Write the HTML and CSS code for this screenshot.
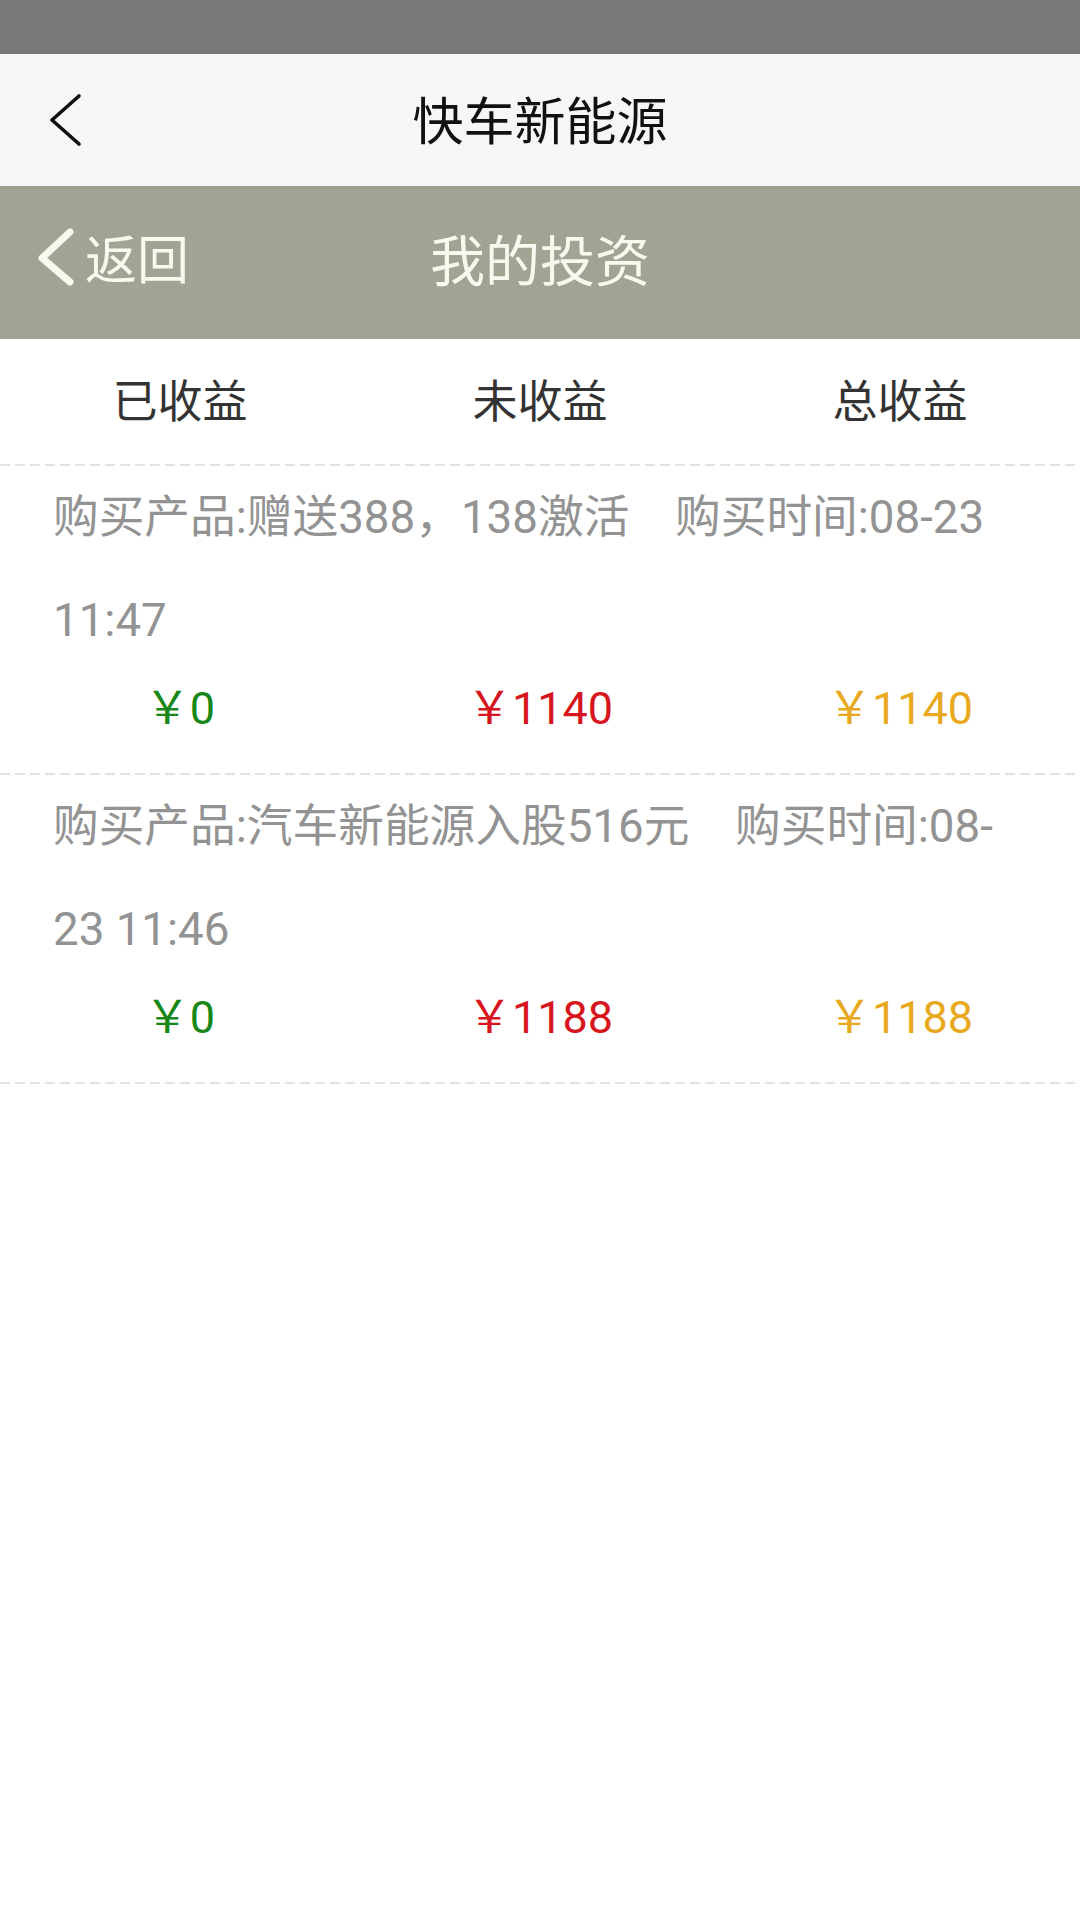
FILE: index.html
```html
<!DOCTYPE html>
<html lang="zh-CN">
<head>
<meta charset="utf-8">
<title>我的投资</title>
<link rel="stylesheet" href="styles.css">
</head>
<body>
<div class="status-bar"></div>
<header class="top-bar">
  <span class="top-back">
    <svg width="40" height="60" viewBox="0 0 40 60"><path d="M35 6 L8 30 L35 54" fill="none" stroke="#111" stroke-width="3.6" stroke-linecap="round" stroke-linejoin="round"/></svg>
  </span>
  <h1 class="top-title">快车新能源</h1>
  <span></span>
</header>
<div class="sub-bar">
  <a class="sub-back">
    <svg width="40" height="60" viewBox="0 0 40 60"><path d="M36 5 L8 31 L36 55" fill="none" stroke="#f8f8ef" stroke-width="7" stroke-linecap="round" stroke-linejoin="round"/></svg>
    <span>返回</span>
  </a>
  <h2 class="sub-title">我的投资</h2>
  <span></span>
</div>
<div class="tabs">
  <div class="tab">已收益</div>
  <div class="tab">未收益</div>
  <div class="tab">总收益</div>
</div>
<ul class="list">
  <li class="item">
    <p class="desc">购买产品:赠送388，138激活　购买时间:08-23 11:47</p>
    <div class="amounts">
      <span class="got">￥0</span>
      <span class="pending">￥1140</span>
      <span class="total">￥1140</span>
    </div>
  </li>
  <li class="item">
    <p class="desc">购买产品:汽车新能源入股516元　购买时间:08-23 11:46</p>
    <div class="amounts">
      <span class="got">￥0</span>
      <span class="pending">￥1188</span>
      <span class="total">￥1188</span>
    </div>
  </li>
</ul>
</body>
</html>
```
FILE: styles.css
```css
* {
  box-sizing: border-box;
}

html, body {
  margin: 0;
  padding: 0;
  background: #ffffff;
}

body {
  font-family: Roboto, "Noto Sans CJK SC", sans-serif;
  width: 1080px;
  min-height: 1920px;
}

.status-bar {
  height: 54px;
  background: #787878;
}

.top-bar {
  height: 132px;
  background: #f6f6f6;
  display: grid;
  grid-template-columns: 1fr auto 1fr;
  align-items: center;
  padding: 0 44px;
}

.top-back {
  display: flex;
  align-items: center;
  height: 60px;
}

.top-back svg {
  display: block;
}

.top-title {
  margin: 0 0 4px;
  font-family: "Noto Sans CJK SC", sans-serif;
  font-weight: 400;
  font-size: 51px;
  line-height: 60px;
  color: #111111;
}

.sub-bar {
  height: 153px;
  background: #a1a493;
  border-top: 3px solid #9a9d8c;
  display: grid;
  grid-template-columns: 1fr auto 1fr;
  align-items: center;
  padding: 0 34px 14px 34px;
}

.sub-back {
  display: flex;
  align-items: center;
  gap: 11px;
  color: #f8f8ef;
  font-family: "Noto Sans CJK SC", sans-serif;
  font-size: 52px;
  line-height: 60px;
}

.sub-back svg {
  display: block;
}

.sub-title {
  margin: 0;
  font-family: "Noto Sans CJK SC", sans-serif;
  font-weight: 400;
  font-size: 55px;
  line-height: 60px;
  color: #f8f8ef;
}

.tabs {
  display: grid;
  grid-template-columns: repeat(3, 1fr);
  height: 127px;
  padding-bottom: 2px;
  background-image: linear-gradient(to right, #e2e2e2 10px, transparent 10px);
  background-size: 15px 2px;
  background-repeat: repeat-x;
  background-position: 0 100%;
}

.tab {
  text-align: center;
  font-family: "Noto Sans CJK SC", sans-serif;
  font-size: 45px;
  line-height: 120px;
  color: #333333;
}

.list {
  list-style: none;
  margin: 0;
  padding: 0;
}

.item {
  padding-bottom: 2px;
  background-image: linear-gradient(to right, #e2e2e2 10px, transparent 10px);
  background-size: 15px 2px;
  background-repeat: repeat-x;
  background-position: 0 100%;
}

.desc {
  margin: 0;
  padding: 0 53px;
  font-size: 45.7px;
  line-height: 103px;
  color: #939393;
}

.amounts {
  display: grid;
  grid-template-columns: repeat(3, 1fr);
  text-align: center;
  font-size: 45px;
  line-height: 74px;
  padding-bottom: 27px;
}

.got {
  color: #178717;
}

.pending {
  color: #d7151c;
}

.total {
  color: #e9a91f;
}
```
